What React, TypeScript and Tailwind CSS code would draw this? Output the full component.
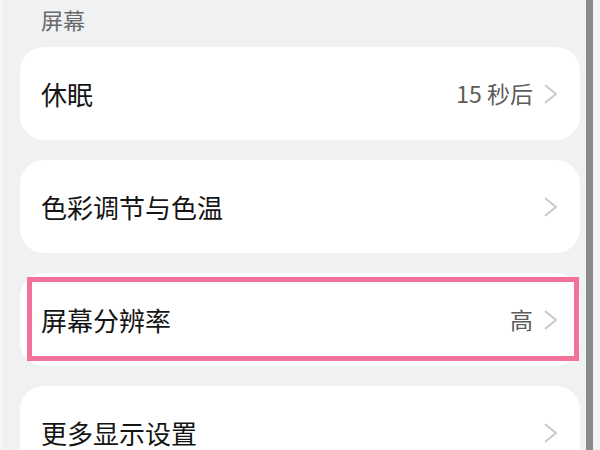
import type { ReactNode } from "react";

const Chevron = () => (
  <svg width="14" height="20" viewBox="0 0 14 20" fill="none" className="shrink-0">
    <polyline
      points="1.5,1.5 12,10 1.5,18.5"
      stroke="#c8c8c8"
      strokeWidth="1.8"
      strokeLinecap="round"
      strokeLinejoin="round"
    />
  </svg>
);

const Row = ({ title, value, marked }: { title: string; value?: string; marked?: boolean }) => (
  <div className="relative flex h-[93px] items-center justify-between rounded-[24px] bg-white pl-[21px] pr-[22px]">
    <span className="text-[26px] leading-none text-[#151515]">{title}</span>
    <div className="flex items-center gap-[11px]">
      {value ? <span className="text-[23px] leading-none text-[#5c5c5c]">{value}</span> : null}
      <Chevron />
    </div>
    {marked ? (
      <div className="absolute bottom-[5px] left-[7px] right-[1px] top-[4px] border-[5px] border-[#f3729a]" />
    ) : null}
  </div>
);

const Section = ({ children }: { children: ReactNode }) => (
  <div className="flex flex-col gap-[20px]">{children}</div>
);

export default function App() {
  return (
    <div
      className="grid h-[450px] w-[600px] grid-cols-[3px_577px_6px_7px_7px] overflow-hidden bg-[#f0f1f3]"
      style={{ fontFamily: '"Noto Sans CJK SC", "Noto Sans", sans-serif' }}
    >
      <div className="bg-[#f6f6f7]" />
      <div className="min-w-0 pl-[17px]">
        <div className="h-[47px] pl-[21px] pt-[5px] text-[22px] leading-[28px] text-[#6a6a6a]">屏幕</div>
        <Section>
          <Row title="休眠" value="15 秒后" />
          <Row title="色彩调节与色温" />
          <Row title="屏幕分辨率" value="高" marked />
          <Row title="更多显示设置" />
        </Section>
      </div>
      <div className="bg-[#f0f1f3]" />
      <div className="h-full bg-[#8a8a8a]" />
      <div className="bg-[#f2f2f2]" />
    </div>
  );
}
